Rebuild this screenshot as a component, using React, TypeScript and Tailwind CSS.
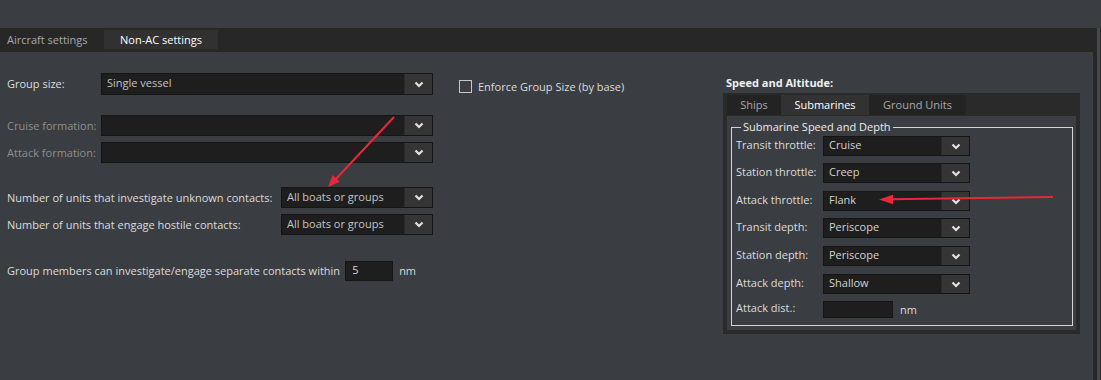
import React from "react";

const Chevron = () => (
  <svg width="10" height="7" viewBox="0 0 10 7">
    <polyline points="1.5,1.5 5,5 8.5,1.5" fill="none" stroke="#e2e2e2" strokeWidth="2.2" />
  </svg>
);

function Select({
  value = "",
  className = "",
  textClass = "text-[#cdcdcd]",
}: {
  value?: string;
  className?: string;
  textClass?: string;
}) {
  return (
    <div className={`flex border border-[#151515] bg-[#1e1e1e] ${className}`}>
      <div className={`flex-1 flex items-center pl-[5px] pb-[2px] whitespace-nowrap ${textClass}`}>{value}</div>
      <div className="w-[28px] flex items-center justify-center bg-[#353535] border-l border-[#2a2a2a]">
        <Chevron />
      </div>
    </div>
  );
}

function SubRow({ label, value, className = "" }: { label: string; value: string; className?: string }) {
  return (
    <div className={`flex items-center h-[20px] ${className}`}>
      <div className="w-[87px] pb-[2px] whitespace-nowrap">{label}</div>
      <Select value={value} className="w-[147px] h-[20px]" textClass="text-[#d2d2d2]" />
    </div>
  );
}

export default function App() {
  return (
    <div className="w-[1101px] h-[380px] bg-[#3a3d41] relative overflow-hidden flex font-['Open_Sans',sans-serif] text-[11px] leading-[14px] text-[#dcdcdc]">
      <div className="w-[1097px] flex flex-col">
        <div className="h-[28px]" />
        {/* main tab bar */}
        <div className="h-[24px] bg-[#272727] flex items-stretch">
          <div className="w-[104px] flex items-center pl-[7px] pb-[1px] text-[#a9a9a9]">Aircraft settings</div>
          <div className="w-[114px] mt-[2px] mb-[3px] bg-[#313131] flex items-center justify-center text-white">
            Non-AC settings
          </div>
        </div>
        {/* content */}
        <div className="flex-1 flex border-r-4 border-[#262626] pl-[7px]">
          {/* left column */}
          <div className="w-[426px] pt-[21px] flex flex-col">
            <div className="flex items-center h-[22px]">
              <div className="w-[94px]">Group size:</div>
              <Select value="Single vessel" className="w-[332px] h-[22px]" textClass="text-[#c4c4c4]" />
            </div>
            <div className="flex items-center h-[21px] mt-[20px] text-[#8e8e8e]">
              <div className="w-[94px]">Cruise formation:</div>
              <Select className="w-[332px] h-[21px]" />
            </div>
            <div className="flex items-center h-[21px] mt-[6px] text-[#8e8e8e]">
              <div className="w-[94px]">Attack formation:</div>
              <Select className="w-[332px] h-[21px]" />
            </div>
            <div className="flex items-center h-[21px] mt-[24px]">
              <div className="flex-1 whitespace-nowrap">Number of units that investigate unknown contacts:</div>
              <Select value="All boats or groups" className="w-[152px] h-[21px]" textClass="text-[#c4c4c4]" />
            </div>
            <div className="flex items-center h-[21px] mt-[6px]">
              <div className="flex-1 whitespace-nowrap">Number of units that engage hostile contacts:</div>
              <Select value="All boats or groups" className="w-[152px] h-[21px]" textClass="text-[#c4c4c4]" />
            </div>
            <div className="flex items-center h-[20px] mt-[26px]">
              <div className="whitespace-nowrap">Group members can investigate/engage separate contacts within</div>
              <div className="ml-[5px] w-[48px] h-[20px] bg-[#1e1e1e] border border-[#151515] pl-[6px] pb-[2px] flex items-center text-[#d4d4d4]">
                5
              </div>
              <div className="ml-[6px]">nm</div>
            </div>
          </div>
          {/* middle checkbox */}
          <div className="ml-[26px] pt-[28px]">
            <div className="flex items-center h-[13px]">
              <div className="w-[13px] h-[13px] border border-[#c8c8c8]" />
              <div className="ml-[6px] whitespace-nowrap">Enforce Group Size (by base)</div>
            </div>
          </div>
          {/* right panel */}
          <div className="ml-auto mr-[13px] pt-[24px] flex flex-col">
            <div className="pl-[3px] font-bold text-[#f0f0f0] h-[17px]">Speed and Altitude:</div>
            <div className="w-[357px] h-[241px] bg-[#2a2a2a] p-[4px] pt-0 flex flex-col">
              <div className="h-[23px] flex items-stretch pt-[2px] pb-[1px]">
                <div className="w-[54px] bg-[#232323] flex items-center justify-center text-[#a9a9a9]">Ships</div>
                <div className="w-[88px] bg-[#323232] flex items-center justify-center text-white">Submarines</div>
                <div className="w-[97px] bg-[#232323] flex items-center justify-center text-[#a9a9a9]">Ground Units</div>
              </div>
              <div className="flex-1 bg-[#3a3d41] pl-[4px] pr-[3px] pb-[4px] pt-[4px] flex">
                <fieldset className="flex-1 border border-[#d4d4d4] pl-[4px] pr-[4px]">
                  <legend className="ml-[5px] px-[2px] text-[#ececec]">Submarine Speed and Depth</legend>
                  <div className="flex flex-col pt-[2px]">
                    <SubRow label="Transit throttle:" value="Cruise" />
                    <SubRow label="Station throttle:" value="Creep" className="mt-[7px]" />
                    <SubRow label="Attack throttle:" value="Flank" className="mt-[8px]" />
                    <SubRow label="Transit depth:" value="Periscope" className="mt-[7px]" />
                    <SubRow label="Station depth:" value="Periscope" className="mt-[8px]" />
                    <SubRow label="Attack depth:" value="Shallow" className="mt-[8px]" />
                    <div className="flex items-start h-[18px] mt-[7px]">
                      <div className="w-[87px] whitespace-nowrap">Attack dist.:</div>
                      <div className="w-[70px] h-[17px] bg-[#1e1e1e] border border-[#151515]" />
                      <div className="ml-[7px] mt-[2px]">nm</div>
                    </div>
                  </div>
                </fieldset>
              </div>
            </div>
          </div>
        </div>
      </div>
      {/* right edge strips */}
      <div className="w-[4px] flex flex-col">
        <div className="h-[28px]" />
        <div className="flex-1 flex">
          <div className="w-[3px] bg-[#45484c]" />
          <div className="w-[1px] bg-[#2a2a2a]" />
        </div>
      </div>
      {/* annotation arrows */}
      <svg className="absolute inset-0 pointer-events-none" width="1101" height="380">
        <line x1="394" y1="117" x2="334" y2="181" stroke="#e8283a" strokeWidth="2" />
        <polygon points="328,187 339.8,181.7 332.6,174.9" fill="#e8283a" />
        <line x1="1053" y1="197" x2="890" y2="199.3" stroke="#e8283a" strokeWidth="2" />
        <polygon points="879,199.5 893,194.8 893,204.2" fill="#e8283a" />
      </svg>
    </div>
  );
}
